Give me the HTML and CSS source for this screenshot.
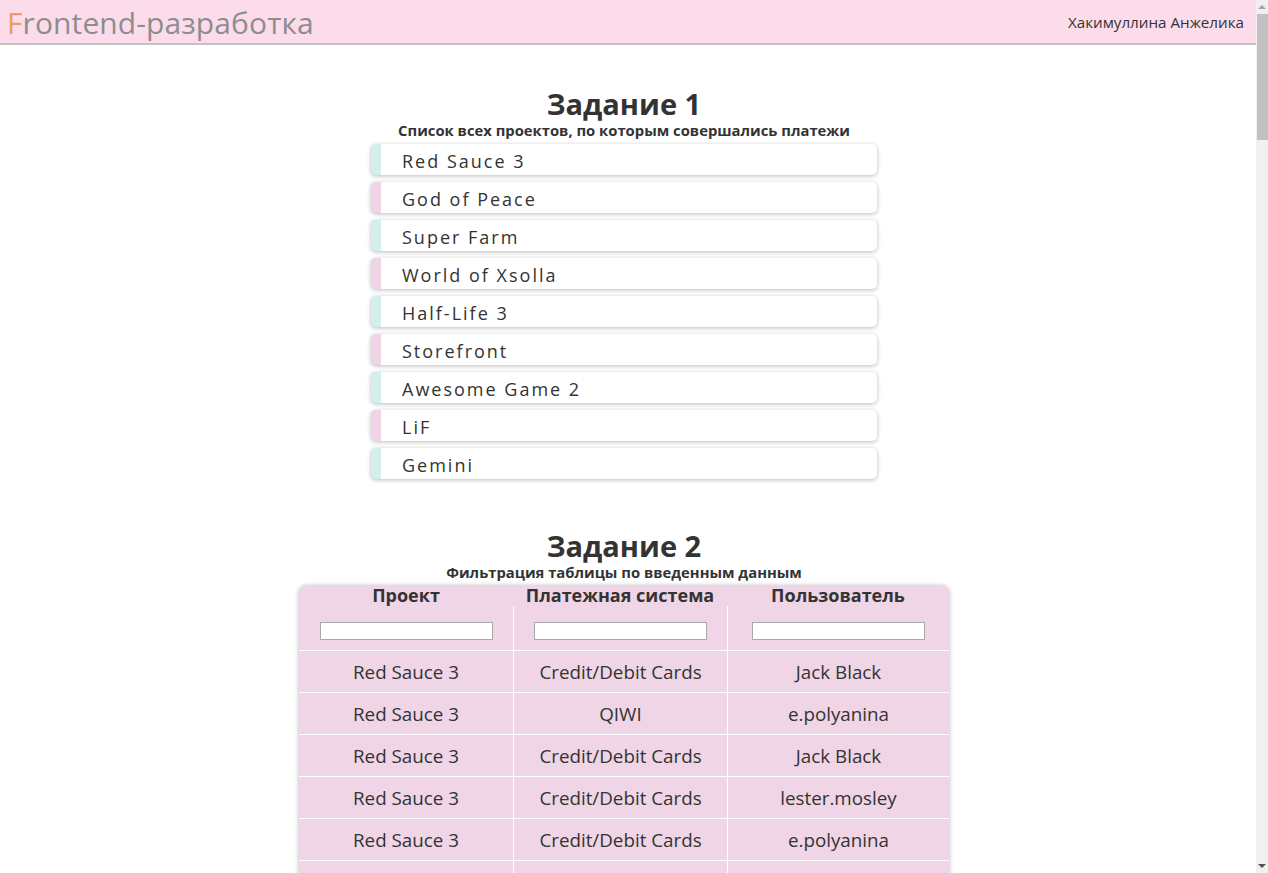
FILE: index.html
```html
<!DOCTYPE html>
<html lang="ru">
<head>
<meta charset="utf-8">
<title>Frontend-разработка</title>
<link rel="stylesheet" href="styles.css">
</head>
<body>
<div class="window">
  <div class="page">
    <header class="topbar">
      <div class="logo"><span class="logo-f">F</span>rontend-разработка</div>
      <div class="user">Хакимуллина Анжелика</div>
    </header>
    <main class="content">
      <section class="task">
        <h1 class="task-title">Задание 1</h1>
        <p class="task-sub">Список всех проектов, по которым совершались платежи</p>
        <ul class="projects">
          <li class="project teal">Red Sauce 3</li>
          <li class="project pink">God of Peace</li>
          <li class="project teal">Super Farm</li>
          <li class="project pink">World of Xsolla</li>
          <li class="project teal">Half-Life 3</li>
          <li class="project pink">Storefront</li>
          <li class="project teal">Awesome Game 2</li>
          <li class="project pink">LiF</li>
          <li class="project teal">Gemini</li>
        </ul>
      </section>
      <section class="task task2">
        <h1 class="task-title">Задание 2</h1>
        <p class="task-sub">Фильтрация таблицы по введенным данным</p>
        <table class="payments">
          <thead>
            <tr class="head-titles">
              <th>Проект</th>
              <th>Платежная система</th>
              <th>Пользователь</th>
            </tr>
            <tr class="head-filters">
              <th><input class="filter" type="text"></th>
              <th><input class="filter" type="text"></th>
              <th><input class="filter" type="text"></th>
            </tr>
          </thead>
          <tbody>
            <tr><td>Red Sauce 3</td><td>Credit/Debit Cards</td><td>Jack Black</td></tr>
            <tr><td>Red Sauce 3</td><td>QIWI</td><td>e.polyanina</td></tr>
            <tr><td>Red Sauce 3</td><td>Credit/Debit Cards</td><td>Jack Black</td></tr>
            <tr><td>Red Sauce 3</td><td>Credit/Debit Cards</td><td>lester.mosley</td></tr>
            <tr><td>Red Sauce 3</td><td>Credit/Debit Cards</td><td>e.polyanina</td></tr>
            <tr class="row-more"><td></td><td></td><td></td></tr>
          </tbody>
        </table>
      </section>
    </main>
  </div>
  <div class="scrollbar">
    <div class="sb-arrow sb-up"></div>
    <div class="sb-track"><div class="sb-thumb"></div></div>
    <div class="sb-arrow sb-down"></div>
  </div>
</div>
</body>
</html>
```

FILE: styles.css
```css
html, body {
  margin: 0;
  padding: 0;
  height: 100%;
  overflow: hidden;
}
body {
  font-family: "Open Sans", "Noto Sans", sans-serif;
  color: #333;
  background: #fff;
}
.window {
  display: flex;
  height: 873px;
}
.page {
  flex: 1;
  overflow: hidden;
}
.topbar {
  height: 43px;
  background: #fcdcea;
  border-bottom: 2px solid #c3c3c3;
  display: flex;
  align-items: center;
  justify-content: space-between;
  padding: 0 12px 0 7px;
}
.logo {
  font-size: 30px;
  color: #8d8d8d;
  letter-spacing: 0.1px;
  padding-top: 1px;
}
.logo-f { color: #e6a15e; }
.user {
  font-size: 15.2px;
  color: #333;
  padding-top: 1px;
}
.content {
  padding: 0 8px 40px 0;
}
.task {
  display: flex;
  flex-direction: column;
  align-items: center;
  padding-top: 42px;
}
.task2 { padding-top: 50px; }
.task-title {
  margin: 0;
  font-size: 29px;
  line-height: 34px;
  font-weight: 700;
}
.task-sub {
  margin: 0;
  font-size: 14.8px;
  line-height: 18px;
  font-weight: 700;
}
.projects {
  list-style: none;
  margin: 5px 0 0;
  padding: 0;
  width: 506px;
  display: flex;
  flex-direction: column;
  gap: 7px;
}
.project {
  height: 31px;
  line-height: 34px;
  box-sizing: border-box;
  background: #fff;
  border-radius: 5px;
  border-left: 10px solid #d3efec;
  box-shadow: 0 1px 4px rgba(0,0,0,0.28);
  padding-left: 21px;
  font-size: 18px;
  letter-spacing: 2px;
  color: #333;
}
.project.pink { border-left-color: #efd5e6; }
.payments {
  margin-top: 4px;
  width: 650px;
  border-collapse: separate;
  border-spacing: 0;
  background: #efd5e6;
  border-radius: 8px;
  box-shadow: 0 1px 5px rgba(0,0,0,0.3);
  table-layout: fixed;
}
.payments th:nth-child(1), .payments td:nth-child(1) { width: 214px; }
.payments th:nth-child(2), .payments td:nth-child(2) { width: 214px; }
.head-titles th {
  font-size: 18px;
  font-weight: 700;
  height: 21px;
  line-height: 21px;
  padding: 0;
  vertical-align: bottom;
}
.head-filters th {
  height: 44px;
  padding: 0;
  vertical-align: middle;
}
.head-filters th + th, .payments td + td {
  border-left: 1px solid #fff;
}
.filter {
  width: 173px;
  height: 18px;
  box-sizing: border-box;
  border: 1px solid #a9a9a9;
  background: #fff;
  padding: 0;
  margin: 5px auto 0;
  display: block;
}
.payments td {
  border-top: 1px solid #fff;
  height: 41px;
  padding: 0;
  text-align: center;
  font-size: 18.8px;
  color: #333;
}
.scrollbar {
  width: 12px;
  background: #f0f0f0;
  display: flex;
  flex-direction: column;
}
.sb-arrow {
  height: 14px;
  display: flex;
  align-items: center;
  justify-content: center;
}
.sb-up::before {
  content: "";
  border-left: 4px solid transparent;
  border-right: 4px solid transparent;
  border-bottom: 4px solid #a3a3a3;
}
.sb-down::before {
  content: "";
  border-left: 4px solid transparent;
  border-right: 4px solid transparent;
  border-top: 4px solid #505050;
}
.sb-track {
  flex: 1;
  padding-left: 1px;
}
.sb-thumb {
  height: 126px;
  background: #c1c1c1;
}
```
